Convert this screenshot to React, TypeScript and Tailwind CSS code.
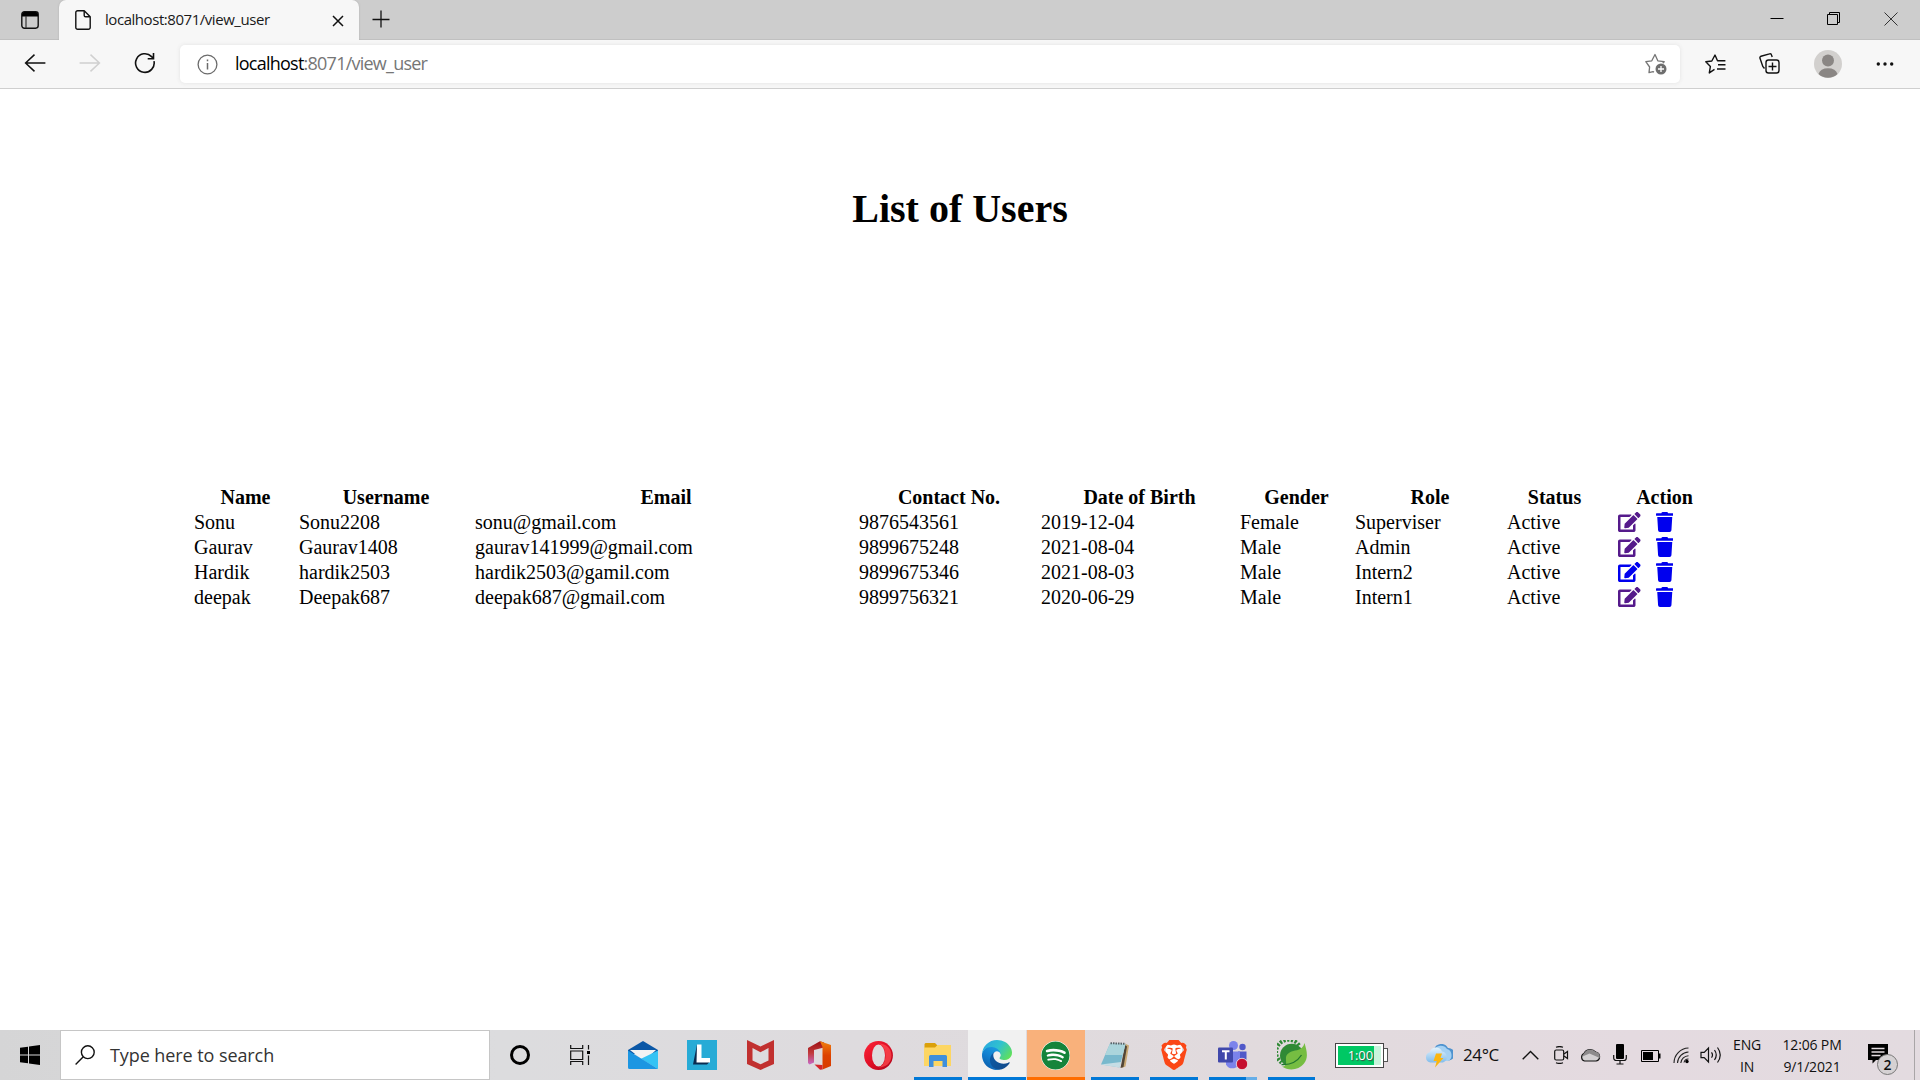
import React from "react";
import { FaEdit, FaSpotify, FaTrash } from "react-icons/fa";
import { SiBrave } from "react-icons/si";

type User = {
  name: string;
  username: string;
  email: string;
  contact: string;
  dob: string;
  gender: string;
  role: string;
  status: string;
  visited: boolean;
};

const users: User[] = [
  { name: "Sonu", username: "Sonu2208", email: "sonu@gmail.com", contact: "9876543561", dob: "2019-12-04", gender: "Female", role: "Superviser", status: "Active", visited: true },
  { name: "Gaurav", username: "Gaurav1408", email: "gaurav141999@gmail.com", contact: "9899675248", dob: "2021-08-04", gender: "Male", role: "Admin", status: "Active", visited: true },
  { name: "Hardik", username: "hardik2503", email: "hardik2503@gamil.com", contact: "9899675346", dob: "2021-08-03", gender: "Male", role: "Intern2", status: "Active", visited: false },
  { name: "deepak", username: "Deepak687", email: "deepak687@gmail.com", contact: "9899756321", dob: "2020-06-29", gender: "Male", role: "Intern1", status: "Active", visited: true },
];

const headings = ["Name", "Username", "Email", "Contact No.", "Date of Birth", "Gender", "Role", "Status", "Action"];

const columns =
  "grid grid-cols-[103px_174px_382px_180px_197px_113px_150px_95px_121px] gap-x-[2px] h-[25px] leading-[25px]";

function TabStrip() {
  return (
    <div className="flex h-10 bg-[#cdcdcd] shadow-[inset_0_-1px_0_#c0c0c0]">
      <div className="flex w-[59px] items-center pl-[21px] pb-px">
        <svg width="18" height="18" viewBox="0 0 18 18" fill="none" className="mt-px">
          <rect x="0.8" y="0.8" width="16.4" height="16.4" rx="2.6" stroke="#111" strokeWidth="1.4" />
          <path d="M1 3.2A2.4 2.4 0 0 1 3.400 1h11.200A2.400 2.400 0 0 1 17 3.200V5.500H1z" fill="#000" />
          <path d="M5 5v12" stroke="#333" strokeWidth="1.2" />
        </svg>
      </div>
      <div className="flex w-[300px] items-center rounded-t-[7px] bg-[#f7f7f7] pl-4 shadow-[0_0_2px_#aaa] [clip-path:inset(-2px_-2px_0_-2px)]">
        <svg width="16" height="20" viewBox="0 0 16 20" fill="none" stroke="#111" strokeWidth="1.4" strokeLinejoin="round">
          <path d="M2.600.800h6.600l6 6v10.600a1.800 1.800 0 0 1-1.800 1.800H2.600a1.800 1.800 0 0 1-1.800-1.800V2.600A1.800 1.800 0 0 1 2.600.800z" />
          <path d="M9.200 1v4.400a1.400 1.400 0 0 0 1.400 1.400h4.400" />
        </svg>
        <span className="mb-[2px] ml-[14px] w-[212px] whitespace-nowrap text-[15px] leading-5 tracking-[-0.45px] text-[#1a1a1a]">
          localhost:8071/view_user
        </span>
        <svg width="12" height="12" viewBox="0 0 12 12" stroke="#111" strokeWidth="1.500" className="ml-[15px] mt-px">
          <path d="M1 1l10 10M11 1L1 11" />
        </svg>
      </div>
      <svg width="18" height="18" viewBox="0 0 18 18" stroke="#111" strokeWidth="1.3" className="ml-[13px] mt-[10px]">
        <path d="M9 .5v17M.5 9.500h17" />
      </svg>
      <div className="ml-auto flex pt-3">
        <svg width="14" height="14" viewBox="0 0 14 14" stroke="#000" className="mr-[42px]">
          <path d="M0.500 6.500h13" />
        </svg>
        <svg width="14" height="14" viewBox="0 0 14 14" stroke="#000" fill="none" className="mr-[44px]">
          <path d="M1.500 2.500h10v10h-10zM3.500 2.500v-2h10v10h-2" />
        </svg>
        <svg width="14" height="14" viewBox="0 0 14 14" stroke="#333" className="mr-[22px]">
          <path d="M.5.500l13 13M13.500.500l-13 13" />
        </svg>
      </div>
    </div>
  );
}

function Toolbar() {
  return (
    <div className="flex h-[49px] items-center border-b border-[#cfcfcf] bg-[#f7f7f7]">
      <div className="flex w-[180px] items-center pb-[2px] pl-6">
        <svg width="22" height="18" viewBox="0 0 22 18" fill="none" stroke="#111" strokeWidth="1.500">
          <path d="M10.500.600L1.600 9l8.900 8.400M1.600 9h19.800" />
        </svg>
        <svg width="22" height="18" viewBox="0 0 22 18" fill="none" stroke="#d0d0d0" strokeWidth="1.500" className="ml-[33px]">
          <path d="M11.500.600L20.400 9l-8.900 8.400M20.400 9H.6" />
        </svg>
        <svg width="22" height="22" viewBox="0 0 22 22" fill="none" stroke="#111" strokeWidth="1.600" className="ml-[33px]">
          <path d="M20 9.200A9.300 9.300 0 1 1 17.600 4.600L19.500 6.400M19.500 1v5.800h-5.800" />
        </svg>
      </div>
      <div className="flex h-[38px] w-[1500px] items-center rounded-[5px] bg-white pl-[17px] pr-[13px] shadow-[0_0_4px_#e2e2e2]">
        <svg width="21" height="21" viewBox="0 0 21 21" fill="none" stroke="#6b6b6b" strokeWidth="1.300">
          <circle cx="10.500" cy="10.500" r="9.400" />
          <path d="M10.500 9v6.500M10.500 5.500v1.800" strokeWidth="1.500" />
        </svg>
        <span className="mb-[2px] ml-[17px] whitespace-nowrap text-[18px] leading-6 tracking-[-0.76px] text-[#767676]">
          <span className="text-black">localhost</span>:8071/view_user
        </span>
        <svg width="22" height="22" viewBox="0 0 22 22" fill="none" className="ml-auto">
          <path d="M9 19.200l-1-.5-4 .9.600-5.600L.8 8.700l6-.9L10 1.500l2.800 6.300 6.400.9-1.500 1.500" stroke="#757575" strokeWidth="1.300" strokeLinejoin="round" />
          <circle cx="16" cy="16" r="5.500" fill="#6e6e6e" />
          <path d="M16 13v6M13 16h6" stroke="#fff" strokeWidth="1.300" />
        </svg>
      </div>
      <div className="flex flex-1 items-center pb-px pl-[25px]">
        <svg width="21" height="20" viewBox="0 0 21 20" fill="none" stroke="#111" strokeWidth="1.400" strokeLinejoin="round">
          <path d="M9.500 15.300l-5.200 3.600 1.100-6.500L.8 7.800l6-.8L10 1l2.500 5.800h7.900M13 10.800h7.500M12 15h8.500" />
        </svg>
        <svg width="21" height="21" viewBox="0 0 21 21" fill="none" stroke="#111" strokeWidth="1.400" className="ml-[33px]">
          <path d="M5.500 15.500L3.800 13.500 1 5.200a1.500 1.500 0 0 1 1-2L10.500.900a1.500 1.500 0 0 1 2 1l.7 2" />
          <rect x="7" y="7" width="13" height="13" rx="2.500" />
          <path d="M13.500 9.500v8M9.500 13.500h8" />
        </svg>
        <svg width="28" height="28" viewBox="0 0 28 28" className="ml-[34px]">
          <circle cx="14" cy="14" r="14" fill="#d2d0ce" />
          <circle cx="14" cy="10.500" r="6" fill="#8a8684" />
          <path d="M4.500 24A9.800 7.500 0 0 1 23.500 24 14 14 0 0 1 4.500 24z" fill="#8a8684" />
        </svg>
        <svg width="18" height="4" viewBox="0 0 18 4" fill="#111" className="ml-[34px]">
          <circle cx="2.300" cy="2" r="1.700" />
          <circle cx="9" cy="2" r="1.700" />
          <circle cx="15.700" cy="2" r="1.700" />
        </svg>
      </div>
    </div>
  );
}

function UserTable() {
  return (
    <div className="mt-[253px] pl-[194px] text-[20px]">
      <div className={columns + " text-center font-bold"}>
        {headings.map((h) => (
          <span key={h}>{h}</span>
        ))}
      </div>
      {users.map((u) => (
        <div key={u.username} className={columns}>
          <span>{u.name}</span>
          <span>{u.username}</span>
          <span>{u.email}</span>
          <span>{u.contact}</span>
          <span>{u.dob}</span>
          <span>{u.gender}</span>
          <span>{u.role}</span>
          <span>{u.status}</span>
          <span className="flex gap-[15px] pl-[14px] pt-[2px]">
            <FaEdit className={u.visited ? "h-5 w-[22.500px] text-[#551a8b]" : "h-5 w-[22.500px] text-[#0000ee]"} />
            <FaTrash className="h-5 w-[17.500px] text-[#0000ee]" />
          </span>
        </div>
      ))}
    </div>
  );
}

function MailIcon() {
  return (
    <svg width="30" height="28" viewBox="0 0 30 28">
      <path d="M0 9L15 0l15 9v4H0z" fill="#0a57a6" />
      <path d="M2 9h26L16 20z" fill="#f3f3f3" />
      <path d="M30 9.500V28L13 17.800z" fill="#35c3f4" />
      <path d="M0 9.500l13.500 8.300L30 28H1.500A1.500 1.500 0 0 1 0 26.500z" fill="#1c96e2" />
    </svg>
  );
}

function LIcon() {
  return (
    <svg width="30" height="30" viewBox="0 0 30 30">
      <path d="M0 0h30v30H0z" fill="#27abd6" />
      <path d="M10 4.500L6 24.500h14l2.500-2.500H10z" fill="#0a2c50" />
      <path d="M10 4.500h4.500V18H23v4.500H9.500z" fill="#fff" />
    </svg>
  );
}

function McAfeeIcon() {
  return (
    <svg width="27" height="30" viewBox="0 0 27 30">
      <path fillRule="evenodd" d="M0 0l13.500 6.500L27 0v24l-13.500 6L0 24zM5.500 8v12.500l8 3.800 8-3.800V8l-8 4.200z" fill="#c1302f" />
    </svg>
  );
}

function OfficeIcon() {
  return (
    <svg width="23" height="29" viewBox="0 0 23 29">
      <defs>
        <linearGradient id="officeLeft" x1="0" y1="0" x2="0" y2="1">
          <stop offset="0" stopColor="#9c0f14" />
          <stop offset=".5" stopColor="#c23a3a" />
          <stop offset="1" stopColor="#c86bc8" />
        </linearGradient>
        <linearGradient id="officeRight" x1="0" y1="0" x2="0" y2="1">
          <stop offset="0" stopColor="#f08010" />
          <stop offset=".5" stopColor="#dd4200" />
          <stop offset="1" stopColor="#d83b01" />
        </linearGradient>
      </defs>
      <path d="M0 7L12 .300 16 1.500v5L6 9v12.500L1.500 23.500 0 22z" fill="url(#officeLeft)" />
      <path d="M12 .300L23 4v21l-8.500 3.500V6z" fill="url(#officeRight)" />
      <path d="M6.500 23.500L14.500 24v4.600l-2.500.2z" fill="#d4262b" />
    </svg>
  );
}

function OperaIcon() {
  return (
    <svg width="29" height="29" viewBox="0 0 29 29">
      <defs>
        <linearGradient id="opera" x1="0" y1="0" x2="1" y2="1">
          <stop offset="0" stopColor="#ff2338" />
          <stop offset=".6" stopColor="#d80b22" />
          <stop offset="1" stopColor="#a7061a" />
        </linearGradient>
      </defs>
      <circle cx="14.500" cy="14.500" r="14.400" fill="url(#opera)" />
      <path d="M14.500 2.500c8 0 13 5 13 12s-5 12-13 12c4-1 7-6 7-12s-3-11-7-12z" fill="#ff4b50" opacity=".75" />
      <ellipse cx="14.500" cy="14.500" rx="6.500" ry="11" fill="#dedbdd" />
    </svg>
  );
}

function ExplorerIcon() {
  return (
    <svg width="28" height="24" viewBox="0 0 28 24">
      <path d="M1.500 0H11l2 2v4H.5V1z" fill="#dba00a" />
      <path d="M13 2h13.500v4H13z" fill="#f9cf57" />
      <path d="M0 4.500h11L13.500 2H27v21H0z" fill="#fdd663" />
      <path d="M5 24V13.500A1.500 1.500 0 0 1 6.500 12h15a1.500 1.500 0 0 1 1.500 1.500V24h-4.500v-6h-9v6z" fill="#3f8fdc" />
    </svg>
  );
}

function EdgeIcon() {
  return (
    <svg width="30" height="30" viewBox="0 0 256 256">
      <defs>
        <linearGradient id="edgeBase" x1="0" y1=".3" x2="1" y2=".8">
          <stop offset="0" stopColor="#0c59a4" />
          <stop offset="1" stopColor="#114a8b" />
        </linearGradient>
        <linearGradient id="edgeMid" x1=".7" y1="0" x2=".2" y2="1">
          <stop offset="0" stopColor="#1b9de2" />
          <stop offset=".5" stopColor="#127fcf" />
          <stop offset="1" stopColor="#0a5aa9" />
        </linearGradient>
        <linearGradient id="edgeTop" x1="0" y1=".2" x2="1" y2=".7">
          <stop offset="0" stopColor="#2aa7e0" />
          <stop offset=".5" stopColor="#2fc2cf" />
          <stop offset="1" stopColor="#60e05a" />
        </linearGradient>
      </defs>
      <path d="M231 190.500c-3.400 1.800-6.900 3.400-10.500 4.700a101.700 101.700 0 0 1-35.900 6.400c-47.300 0-88.500-32.500-88.500-74.300 0-11.500 6.400-21.900 16.400-27.300-42.800 1.800-53.800 46.400-53.800 72.500 0 73.900 68.100 81.400 82.800 81.400 7.900 0 19.800-2.300 27-4.600l1.300-.4a128.300 128.300 0 0 0 66.600-52.800 4 4 0 0 0-5.400-5.600z" fill="url(#edgeBase)" />
      <path d="M105.700 241.400A79.200 79.200 0 0 1 83 220.100a80.700 80.700 0 0 1 29.500-120c3.100-1.500 8.500-4.100 15.600-4a32.400 32.400 0 0 1 25.700 13 31.900 31.900 0 0 1 6.300 18.700c0-.2 24.500-79.600-80-79.600-43.900 0-80 41.600-80 78.200-.2 19.300 4 38.400 12.100 56A128 128 0 0 0 168.800 249c-21 6.500-44 3.700-63.100-7.600z" fill="url(#edgeMid)" />
      <path d="M152.300 148.900c-.8 1-3.300 2.500-3.300 5.700 0 2.600 1.700 5.100 4.700 7.300 14.400 10 41.500 8.600 41.500 8.600 10.700 0 21.100-2.900 30.300-8.300A61.400 61.400 0 0 0 256 109.200c.3-22.400-8-37.300-11.300-43.900C223.500 23.900 177.700 0 128 0A128 128 0 0 0 0 126.200c.5-36.500 36.800-66 80-66 3.500 0 23.500.3 42 10.100 16.300 8.600 24.900 18.900 30.800 29.200 6.200 10.700 7.300 24.100 7.300 29.500 0 5.300-2.700 13.300-7.800 19.900z" fill="url(#edgeTop)" />
    </svg>
  );
}

function NotepadIcon() {
  return (
    <svg width="28" height="26" viewBox="0 0 28 26">
      <path d="M24 1.500l4 2-3.500 21-4 1.500z" fill="#c8a873" />
      <path d="M24 3l2 1.500-3.500 20.500-3 1z" fill="#514537" />
      <path d="M9 1.500L24.500 2 18.500 25.500 0 22.500z" fill="#79b9cd" />
      <path d="M9 1.500L24.500 2l-2.800 11L4 13z" fill="#abd5dc" />
      <path d="M9.500 1.200l15 .6" stroke="#596469" strokeWidth="2" strokeDasharray="1.500 1" />
      <path d="M0 22.500l18.500 3L20 20z" fill="#e5edf0" opacity=".7" />
    </svg>
  );
}

function BraveIcon() {
  return (
    <div className="grid place-items-center">
      <div className="col-start-1 row-start-1 h-5 w-[16px] rounded-b-lg bg-white" />
      <SiBrave className="z-10 col-start-1 row-start-1 size-[30px] text-[#fb4716]" />
    </div>
  );
}

function TeamsIcon() {
  return (
    <svg width="30" height="30" viewBox="0 0 30 30">
      <circle cx="15.500" cy="5.500" r="4.500" fill="#7b83eb" />
      <circle cx="24.500" cy="7" r="3.200" fill="#5059c9" />
      <path d="M20 11.500h8.500V19a5.500 5.500 0 0 1-8.500 4z" fill="#5059c9" />
      <path d="M8 11.500h14v10a7.500 7.500 0 0 1-14 3z" fill="#7b83eb" />
      <rect x="0" y="7.500" width="15" height="15" rx="1" fill="#4048ab" />
      <path d="M4 11.200h7.500M7.800 11.500v8" stroke="#fff" strokeWidth="2" />
      <circle cx="24" cy="24" r="5.700" fill="#c50f2f" stroke="#eee" strokeWidth=".8" />
    </svg>
  );
}

function SpringIcon() {
  return (
    <svg width="30" height="30" viewBox="0 0 30 30">
      <circle cx="14.800" cy="15.500" r="11.800" fill="#2f8a35" />
      <path d="M22 5.300A12.500 12.500 0 1 0 4.500 22.500" fill="none" stroke="#2f8a35" strokeWidth="4" strokeDasharray="2.300 1.500" />
      <path d="M27.500 3C30 11 31.500 18 27 23.500 22 30 12 31.500 5 26.500 11 26 8.500 21 9 17c1-4.500 6-6 11-6.800 4-.8 6.500-3.200 7.500-7.200z" fill="#76bd42" />
      <path d="M4.500 24.500c8 .5 15.500-2.500 20-9.500" fill="none" stroke="#23772f" strokeWidth="1.300" />
    </svg>
  );
}

type TaskbarApp = { id: string; icon: React.ReactNode; cell?: string; bar?: string };

const apps: TaskbarApp[] = [
  { id: "mail", icon: <MailIcon /> },
  { id: "l", icon: <LIcon /> },
  { id: "mcafee", icon: <McAfeeIcon /> },
  { id: "office", icon: <OfficeIcon /> },
  { id: "opera", icon: <OperaIcon /> },
  { id: "explorer", icon: <ExplorerIcon />, bar: "w-12 bg-[#0078d7]" },
  { id: "edge", icon: <EdgeIcon />, cell: "bg-[#f1f1f1]", bar: "w-[58px] bg-[#0078d7]" },
  { id: "spotify", icon: <FaSpotify className="size-[29px] rounded-full bg-white text-[#15843b]" />, cell: "bg-[#f9b17b]", bar: "w-[58px] bg-[#ff6d00]" },
  { id: "notepad", icon: <NotepadIcon />, bar: "w-12 bg-[#0078d7]" },
  { id: "brave", icon: <BraveIcon />, bar: "w-12 bg-[#0078d7]" },
  { id: "teams", icon: <TeamsIcon />, bar: "w-12 bg-[linear-gradient(90deg,#0078d7_37px,#66aee8_37px)]" },
  { id: "spring", icon: <SpringIcon />, bar: "mr-[2px] w-[47px] bg-[#0078d7]" },
];

function Tray() {
  return (
    <div className="flex flex-1 items-center pl-[13px]">
      <div className="flex items-center">
        <div className="flex h-[25px] w-[49px] border border-[#444] bg-white p-[2px]">
          <div className="flex w-9 items-center justify-end bg-[#00c864] pr-[1px] text-[13px] leading-none tracking-[-0.1px] text-white [text-shadow:1px_1px_1px_#444]">
            1:00
          </div>
          <div className="flex-1 bg-[#c8f4dc]" />
        </div>
        <div className="h-[14px] w-1 border border-l-0 border-[#555] bg-white" />
      </div>
      <svg width="28" height="24" viewBox="0 0 28 24" className="ml-[37px] mt-[2px]">
        <defs>
          <linearGradient id="cloud" x1="0" y1="0" x2="0" y2="1">
            <stop offset="0" stopColor="#e4f3fc" />
            <stop offset="1" stopColor="#83bdec" />
          </linearGradient>
        </defs>
        <path d="M9 6a7.500 7.500 0 0 1 14-2 6 6 0 0 1 1 12.500h-8z" fill="#4f93cf" />
        <path d="M9 6a7.500 7.500 0 0 1 13-1 6.500 6.500 0 0 1 1 12h-8z" fill="#a5d1f3" />
        <path d="M5.500 18.500a5.300 5.300 0 0 1-.8-10.300A6.500 6.500 0 0 1 17 7.500a5.700 5.700 0 0 1 1 11z" fill="url(#cloud)" />
        <path d="M11 9.500h6l-1.500 4.500h3L10 23.500l1.800-6.500H8.500z" fill="#fbb60f" />
      </svg>
      <span className="ml-[10px] w-[59px] whitespace-nowrap text-[17px] leading-6 tracking-[-0.400px]">24°C</span>
      <svg width="17" height="10" viewBox="0 0 17 10" fill="none" stroke="#111" strokeWidth="1.400" className="mb-px">
        <path d="M.7 9.300l7.800-7.800 7.800 7.800" />
      </svg>
      <svg width="15" height="18" viewBox="0 0 15 18" fill="none" stroke="#111" strokeWidth="1.200" className="ml-[15px]">
        <rect x=".7" y="4" width="9" height="10" rx="1.500" />
        <path d="M10 8l3.500-2.500v7L10 10M2 1.200q3.500-1.300 7 0M2 16.800q3.500 1.300 7 0" />
      </svg>
      <svg width="21" height="15" viewBox="0 0 21 15" className="mb-px ml-[11px]">
        <path d="M4.500 14a4 4 0 0 1-.5-7.500A7 7 0 0 1 15.500 5a4.600 4.600 0 0 1 .7 9z" fill="#d3d0d2" stroke="#111" strokeWidth="1.200" />
        <path d="M4 6.500A6.800 6.800 0 0 1 15.500 5a4.500 4.500 0 0 1 4.300 4.500V11L9.500 6.500 2.500 9.500z" fill="#8d8b8c" />
      </svg>
      <svg width="14" height="21" viewBox="0 0 14 21" className="mb-px ml-[12px]">
        <rect x="3" y="0" width="8" height="15" rx="1" fill="#000" />
        <path d="M.7 11v3a2.500 2.500 0 0 0 2.500 2.500h7.600a2.500 2.500 0 0 0 2.500-2.500v-3M7 16v4M3.500 20h7" fill="none" stroke="#111" strokeWidth="1.200" />
      </svg>
      <svg width="20" height="12" viewBox="0 0 20 12" className="ml-[14px] mt-px">
        <path d="M.5.500h17v11H.5z" fill="none" stroke="#000" />
        <path d="M2 2h10v8H2zM18 3.500h1.500v5H18z" fill="#000" />
      </svg>
      <svg width="17" height="17" viewBox="0 0 17 17" fill="none" stroke="#222" strokeWidth="1.100" className="ml-[12px]">
        <path d="M1 16A15 15 0 0 1 15.500 1M4.500 16A11.500 11.500 0 0 1 15.500 5M7.800 16A8 8 0 0 1 15.500 8.700M11 15.500A4.500 4.500 0 0 1 15.500 12" />
        <circle cx="14" cy="14.500" r="1.700" fill="#000" stroke="none" />
      </svg>
      <svg width="22" height="18" viewBox="0 0 22 18" fill="none" stroke="#111" strokeWidth="1.200" className="ml-[10px]">
        <path d="M1 6.300h3.200L8.500 2v14l-4.300-4.300H1zM11.500 6.300q2 2.700 0 5.400M14.500 4q3.500 5 0 10M17.500 1.500q5.500 7.500 0 15" />
      </svg>
      <div className="ml-[11px] flex w-7 flex-col items-center gap-[1px] text-[14px] leading-[21px] tracking-[-0.200px]">
        <span>ENG</span>
        <span>IN</span>
      </div>
      <div className="ml-[20px] flex w-[62px] flex-col items-center gap-[1px] whitespace-nowrap text-[14px] leading-[21px] tracking-[-0.150px]">
        <span>12:06 PM</span>
        <span>9/1/2021</span>
      </div>
      <div className="relative ml-[25px] h-[22px] w-5">
        <svg width="20" height="20" viewBox="0 0 20 20">
          <path d="M0 0h20v16H8l-3.500 3.500V16H0z" fill="#000" />
          <path d="M3.500 4.500h13M3.500 8h13M3.500 11.500h9" stroke="#e4dce0" strokeWidth="1.300" />
        </svg>
        <span className="absolute left-[9px] top-[10px] grid size-[21px] place-items-center rounded-full border border-[#777] bg-[#d5d1d3] text-[14px] font-semibold leading-none">
          2
        </span>
      </div>
      <div className="ml-auto h-full w-[6px] border-l border-[#a9a5a7]" />
    </div>
  );
}

function Taskbar() {
  return (
    <div className="flex h-[50px] bg-[linear-gradient(90deg,#d5d5d6_0%,#dcdcde_26%,#dedbde_45%,#e1dadd_65%,#e4dae0_85%,#e3dbe0_100%)] text-[#111]">
      <div className="grid w-[60px] place-items-center">
        <svg width="20" height="20" viewBox="0 0 20 20" fill="#000">
          <path d="M0 2.800L8 1.700v7.800H0zM9 1.500L20 0v9.500H9zM0 10.500h8v7.800L0 17.200zM9 10.500h11V20L9 18.500z" />
        </svg>
      </div>
      <div className="flex h-[50px] w-[430px] items-center border border-[#c6c6c6] bg-white pl-[14px]">
        <svg width="20" height="20" viewBox="0 0 20 20" fill="none" stroke="#111" strokeWidth="1.400">
          <circle cx="12.800" cy="7.200" r="6.400" />
          <path d="M8.300 11.800L.6 19.400" />
        </svg>
        <span className="ml-[15px] whitespace-nowrap text-[18px] leading-6 tracking-[-0.080px] text-[#333]">
          Type here to search
        </span>
      </div>
      <div className="grid w-[60px] place-items-center">
        <div className="size-5 rounded-full border-[3px] border-black" />
      </div>
      <div className="grid w-[64px] place-items-center pr-1">
        <svg width="21" height="20" viewBox="0 0 21 20" fill="none" stroke="#111" strokeWidth="1.200">
          <path d="M.7 0v3.500h12V0M.7 6h12v8.500H.7zM.7 20v-3.500h12V20M18.500 0v4.500M18.500 10.500V20" />
          <path d="M17 6h3v3h-3z" fill="#000" stroke="none" />
        </svg>
      </div>
      {apps.map((a) => (
        <div key={a.id} className="w-[59px] pr-px">
          <div className={"flex h-full flex-col items-center " + (a.cell ?? "")}>
            <div className="grid h-[47px] place-items-center pr-px pt-[3px]">{a.icon}</div>
            <div className={"h-[3px] " + (a.bar ?? "")} />
          </div>
        </div>
      ))}
      <Tray />
    </div>
  );
}

export default function App() {
  return (
    <div className="flex h-[1080px] w-[1920px] flex-col overflow-hidden bg-white font-['Open_Sans','Noto_Sans',sans-serif]">
      <TabStrip />
      <Toolbar />
      <main className="flex-1 font-['Liberation_Serif','Times_New_Roman',serif] text-black">
        <h1 className="mt-[97px] text-center text-[40px] font-bold leading-[46px]">List of Users</h1>
        <UserTable />
      </main>
      <Taskbar />
    </div>
  );
}
